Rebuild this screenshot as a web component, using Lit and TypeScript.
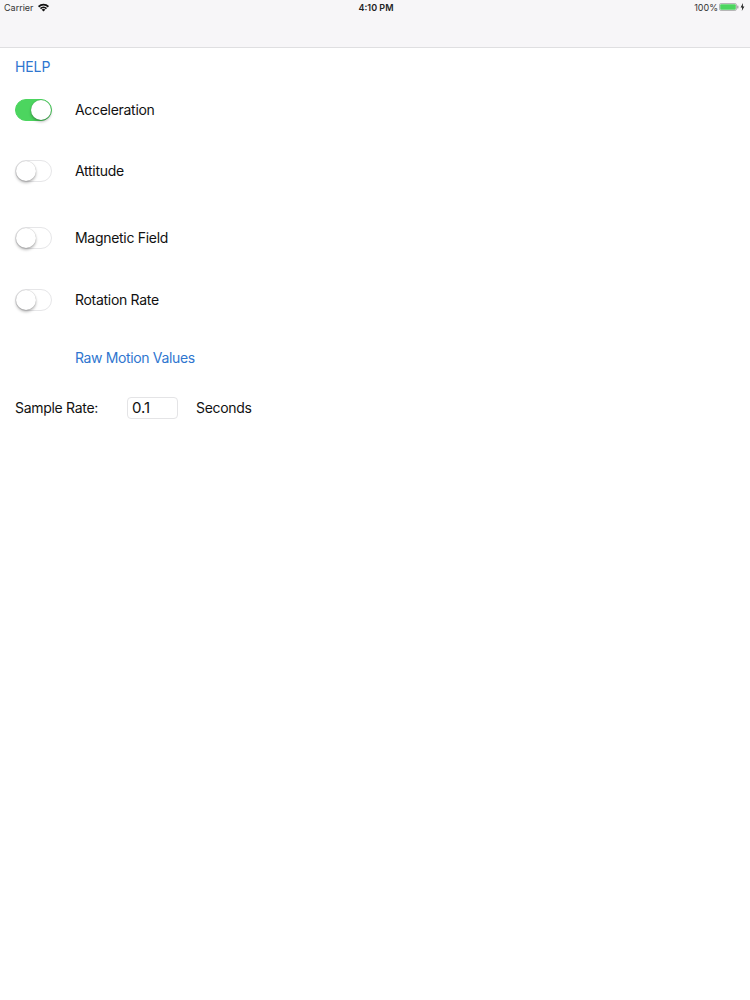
import { LitElement, html, css } from "lit";
import { customElement } from "lit/decorators.js";

const ROWS = [
  { label: "Acceleration", on: true },
  { label: "Attitude", on: false },
  { label: "Magnetic Field", on: false },
  { label: "Rotation Rate", on: false },
];

@customElement("app-root")
export class AppRoot extends LitElement {
  static styles = css`
    :host {
      display: block;
      width: 750px;
      height: 1000px;
      background: #fff;
      font-family: Inter, "Liberation Sans", sans-serif;
      color: #111;
      font-size: 14px;
      overflow: hidden;
    }
    .nav {
      height: 47px;
      background: #f7f6f8;
      border-bottom: 1px solid #dfdfe1;
    }
    .status {
      height: 14px;
      padding: 0 5px 0 4px;
      display: grid;
      grid-template-columns: 1fr auto 1fr;
      align-items: center;
      font-size: 9px;
      color: #333;
    }
    .left { display: flex; align-items: center; gap: 4px; }
    .time { font-weight: 600; color: #222; padding-left: 3px; }
    .right { display: flex; align-items: center; justify-content: flex-end; gap: 1px; }
    .main {
      display: grid;
      grid-template-rows: 38px 48px 74px 60px 64px 52px 48px;
      padding-left: 15px;
    }
    .row { display: flex; align-items: center; }
    .txt { letter-spacing: -0.3px; margin-bottom: 2px; }
    .help { color: #2f76cf; margin-bottom: 2px; letter-spacing: -0.1px; }
    .switch {
      position: relative;
      width: 37px;
      height: 22px;
      box-sizing: border-box;
      border-radius: 11px;
      border: 1px solid #e6e6e8;
      background: #fff;
      margin-right: 23px;
      flex: none;
    }
    .switch.on { background: #4cd55f; border-color: #4cd55f; }
    .knob {
      position: absolute;
      top: 0;
      left: 0;
      width: 20px;
      height: 20px;
      border-radius: 50%;
      background: #fff;
      box-shadow: 0 2px 3px rgba(0, 0, 0, 0.28), 0 0 1px rgba(0, 0, 0, 0.3);
    }
    .switch.on .knob { left: 15px; }
    .link { color: #2f76cf; margin-left: 60px; letter-spacing: -0.36px; }
    .sample-label { width: 112px; flex: none; }
    .field {
      width: 51px;
      height: 22px;
      box-sizing: border-box;
      border: 1px solid #e4e4e6;
      border-radius: 4px;
      padding: 0 0 1px 4px;
      display: flex;
      align-items: center;
      margin-right: 18px;
      font-size: 15px;
    }
  `;

  render() {
    return html`
      <div class="nav">
        <div class="status">
          <div class="left">
            <span>Carrier</span>
            <svg width="11" height="9" viewBox="0 0 11 8">
              <path d="M0 2.6 A7.8 7.8 0 0 1 11 2.6 L9.8 3.9 A6 6 0 0 0 1.2 3.9 Z" fill="#111" />
              <path d="M1.9 4.5 A5 5 0 0 1 9.1 4.5 L7.9 5.7 A3.3 3.3 0 0 0 3.1 5.7 Z" fill="#111" />
              <path d="M3.7 6.2 A2.5 2.5 0 0 1 7.3 6.2 L5.5 8 Z" fill="#111" />
            </svg>
          </div>
          <div class="time">4:10 PM</div>
          <div class="right">
            <span>100%</span>
            <svg width="20" height="8" viewBox="0 0 20 8">
              <rect x="0.5" y="0.5" width="17" height="7" rx="1.6" fill="none" stroke="#9a9a9a" stroke-width="0.7" />
              <rect x="1.2" y="1.2" width="15.6" height="5.6" rx="1" fill="#4cd55f" />
              <rect x="18.2" y="2.6" width="1.2" height="2.8" rx="0.5" fill="#9a9a9a" />
            </svg>
            <svg width="5" height="8" viewBox="0 0 5 8">
              <path d="M3 0 L0.6 4.4 H2.2 L1.8 8 L4.4 3.4 H2.8 Z" fill="#222" />
            </svg>
          </div>
        </div>
      </div>
      <div class="main">
        <div class="row"><span class="help">HELP</span></div>
        ${ROWS.map(
          (r) => html`
            <div class="row">
              <div class="switch ${r.on ? "on" : ""}"><div class="knob"></div></div>
              <span class="txt">${r.label}</span>
            </div>
          `
        )}
        <div class="row"><span class="txt link">Raw Motion Values</span></div>
        <div class="row">
          <span class="txt sample-label">Sample Rate:</span>
          <div class="field">0.1</div>
          <span class="txt">Seconds</span>
        </div>
      </div>
    `;
  }
}
